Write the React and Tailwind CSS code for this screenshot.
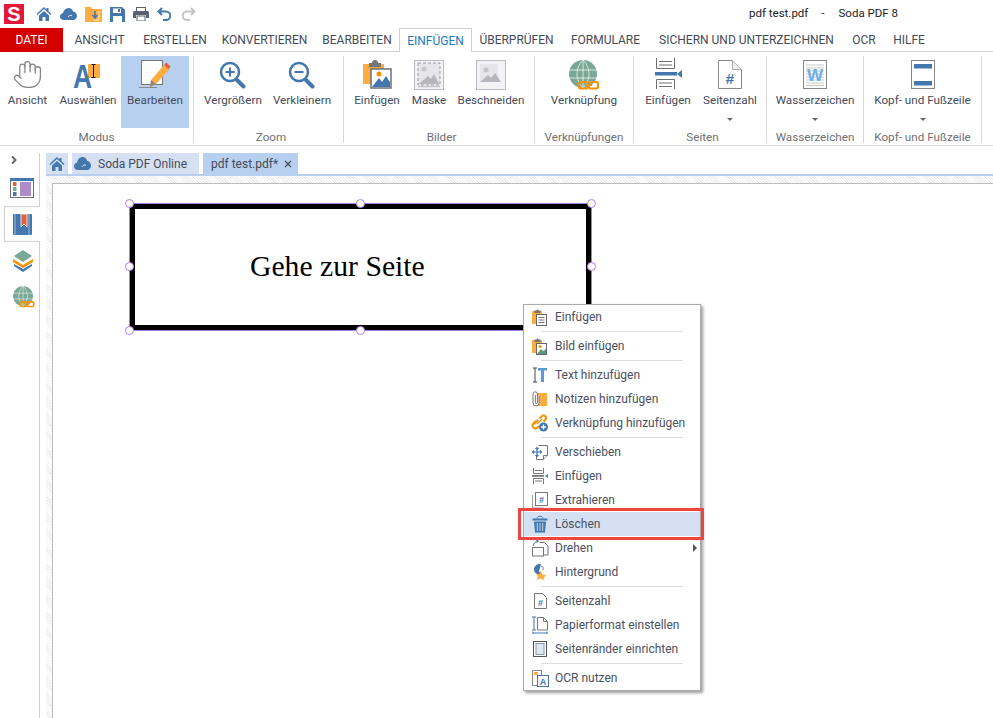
import React from "react";
import { Hand } from "lucide-react";

const BLUE = "#4377ad";
const ORANGE = "#ffad42";
const GREEN = "#7aa897";

// toolbar icons
function HomeIcon({ size = 16 }) {
  return (
    <svg width={size} height={size} viewBox="0 0 16 16">
      <path d="M8 1 0.500 8l1 1L8 3l6.500 6 1-1-3-2.800V2h-2v1.400z" fill={BLUE} />
      <path d="M3 9.500 8 5l5 4.500V15H9.500v-4h-3v4H3z" fill={BLUE} />
    </svg>
  );
}

function CloudIcon({ w = 17, h = 12 }) {
  return (
    <svg width={w} height={h} viewBox="0 0 17 12" preserveAspectRatio="none">
      <path d="M4 12C1.500 12 0 10.500 0 8.500 0 6.500 1.500 5.300 3 5.200 3.600 2.200 5.800 0 8.500 0c2.400 0 4 1.500 4.600 3.500C15.300 3.800 17 5.800 17 8c0 2.300-1.800 4-4 4z" fill={BLUE} />
      <path d="M8 9c1-1.500 2.500-2 4-1.500" stroke="#fff" strokeWidth="0.800" fill="none" />
    </svg>
  );
}

function QuickBar() {
  return (
    <div className="flex items-center h-7 relative">
      <div className="ml-1 w-5 h-5 bg-[#e31837] text-white font-bold text-[20px] leading-5 text-center font-['Liberation_Sans',sans-serif]">S</div>
      <div className="ml-3 w-4 h-4 -mt-[1px]"><HomeIcon /></div>
      <div className="ml-2"><CloudIcon /></div>
      <svg className="ml-2" width="17" height="16" viewBox="0 0 17 16">
        <path d="M0 1h6l1 2h10v13H0z" fill={ORANGE} />
        <path d="M10 5v6m-2.500-2 2.500 3 2.500-3" stroke={BLUE} strokeWidth="1.500" fill="none" />
        <path d="M8 14h6V5" stroke="#fff" strokeWidth="0.800" fill="none" />
      </svg>
      <svg className="ml-2" width="15" height="15" viewBox="0 0 15 15">
        <path d="M0 0h12l3 3v12H0z" fill={BLUE} />
        <rect x="3" y="1.500" width="8" height="4.500" fill="#fff" />
        <rect x="8" y="2" width="2" height="3" fill={BLUE} />
        <rect x="3" y="9" width="9" height="6" fill="#fff" />
      </svg>
      <svg className="ml-2" width="16" height="14" viewBox="0 0 16 14">
        <rect x="3.500" y="0.500" width="9" height="4" fill="#fff" stroke="#5a6270" />
        <path d="M1.500 4h13A1.500 1.500 0 0 1 16 5.500V11h-3V8H3v3H0V5.500A1.500 1.500 0 0 1 1.500 4z" fill="#5a6270" />
        <rect x="4" y="9" width="8" height="5" fill="#fff" stroke="#5a6270" />
      </svg>
      <svg className="ml-2" width="14" height="14" viewBox="0 0 14 14">
        <path d="M5 1 1.500 4.500 5 8M2 4.500h7a3.800 3.800 0 0 1 0 8.500H6" fill="none" stroke={BLUE} strokeWidth="2" />
      </svg>
      <svg className="ml-[11px]" width="14" height="14" viewBox="0 0 14 14">
        <path d="M9 1l3.500 3.500L9 8M12 4.500H5a3.800 3.800 0 0 0 0 8.500h3" fill="none" stroke="#c3c4c7" strokeWidth="2" />
      </svg>
      <div className="absolute left-[749px] top-[5px] text-[11.5px] text-[#222] flex">
        <span>pdf test.pdf</span>
        <span className="ml-[13px]">-</span>
        <span className="ml-[14px]">Soda PDF 8</span>
      </div>
    </div>
  );
}

const tabs = [
  { label: "ANSICHT", cls: "w-[73px]" },
  { label: "ERSTELLEN", cls: "w-[78px]" },
  { label: "KONVERTIEREN", cls: "w-[101px]" },
  { label: "BEARBEITEN", cls: "w-[84px]" },
  { label: "EINFÜGEN", cls: "w-[73px] h-[24px] bg-white border border-b-0 border-[#d0d0d0] !text-[#1d79c4]" },
  { label: "ÜBERPRÜFEN", cls: "w-[89px]" },
  { label: "FORMULARE", cls: "w-[89px]" },
  { label: "SICHERN UND UNTERZEICHNEN", cls: "w-[193px]" },
  { label: "OCR", cls: "w-[42px]" },
  { label: "HILFE", cls: "w-[48px]" },
];

function TabBar() {
  return (
    <div className="flex h-[24px] border-b border-[#d4d4d4] text-[12px] text-[#444b58]">
      <div className="w-[63px] h-[24px] bg-[#d40000] text-white flex items-center justify-center">DATEI</div>
      {tabs.map((t) => (
        <div key={t.label} className={"flex items-center justify-center whitespace-nowrap " + t.cls}>{t.label}</div>
      ))}
    </div>
  );
}

// ribbon icons
function SelectIcon() {
  return (
    <svg width="30" height="32" viewBox="0 0 30 32" overflow="visible">
      <rect x="15" y="5" width="12" height="14" fill={ORANGE} />
      <text transform="translate(0 29) scale(0.8 1)" fontFamily="Liberation Sans" fontWeight="bold" fontSize="33" fill={BLUE}>A</text>
      <path d="M18.500 5.500h4m-2 0v13m-2 0h4" stroke="#111" strokeWidth="1" fill="none" />
    </svg>
  );
}

function EditIcon() {
  return (
    <svg width="34" height="32" viewBox="0 0 34 32">
      <rect x="3.500" y="1.500" width="21" height="24" fill="#fff" stroke="#777" />
      <path d="M1 28.500h18" stroke="#888" />
      <path d="M13 21 26 6l5 4.500L18 25l-6 3z" fill={ORANGE} />
      <path d="M26 6l2.500-2.500 4 4-2 3z" fill="#e2603f" />
      <path d="M13 21l5 4-6 3z" fill="#888" />
    </svg>
  );
}

function ZoomIcon({ plus }) {
  return (
    <svg width="28" height="30" viewBox="0 0 28 30">
      <circle cx="11" cy="13" r="9" fill="#fff" stroke={BLUE} strokeWidth="2.500" />
      <path d="M6.500 13h9" stroke={BLUE} strokeWidth="2" />
      {plus && <path d="M11 8.500v9" stroke={BLUE} strokeWidth="2" />}
      <path d="M18 21l6.500 6.500" stroke={BLUE} strokeWidth="4" strokeLinecap="round" />
    </svg>
  );
}

function PasteImgIcon() {
  return (
    <svg width="30" height="30" viewBox="0 0 30 30">
      <path d="M1 5h21v20H1z" fill={ORANGE} />
      <path d="M7 4h3a3 3 0 0 1 6 0h3v4H7z" fill="#74767c" />
      <rect x="9" y="10" width="20" height="19" fill="#fff" stroke="#6a6f78" strokeWidth="1.500" />
      <path d="M10 28l7-9 3 4 4-6 4 6v5z" fill={BLUE} />
      <circle cx="17" cy="15" r="2.500" fill="#f59300" />
    </svg>
  );
}

function ImgGrayIcon({ dashed }) {
  return (
    <svg className="mt-[1px]" width="30" height="30" viewBox="0 0 30 30">
      <rect x="0.500" y="0.500" width="29" height="29" fill="#f3f3f5" stroke="#bcbcc4" />
      {dashed ? (
        <>
          <rect x="4" y="3" width="22" height="22" fill="#e6e6ea" stroke="#9a9aa2" strokeDasharray="3 2" />
          <circle cx="10" cy="9" r="2.500" fill="#c4c4cc" />
          <path d="M5 24l9-8 3 3 3-5 5 10z" fill="#b5b5bd" />
          <path d="M4 26.500h22" stroke="#c4c4cc" strokeWidth="1.500" />
        </>
      ) : (
        <>
          <rect x="4" y="4" width="18" height="18" fill="#e6e6ea" />
          <circle cx="10" cy="10" r="2.500" fill="#c4c4cc" />
          <path d="M4 22l8-7 3 3 4-5 6 9z" fill="#b5b5bd" />
        </>
      )}
    </svg>
  );
}

function GlobeLinkIcon({ scale = 1, cls = "" }) {
  return (
    <svg className={cls} width={31 * scale} height={30 * scale} viewBox="0 0 31 30">
      <circle cx="14" cy="14" r="14" fill={GREEN} />
      <path d="M0 10h28M0 18h28M14 0v28M14 0c-8 8-8 20 0 28M14 0c8 8 8 20 0 28" fill="none" stroke="#fff" strokeWidth="0.700" />
      <rect x="10" y="22" width="9" height="6.500" rx="2" fill="none" stroke="#f59300" strokeWidth="2.200" />
      <rect x="20" y="22" width="9" height="6.500" rx="2" fill="none" stroke="#f59300" strokeWidth="2.200" />
      <path d="M16 25.200h7" stroke="#f59300" strokeWidth="1.500" />
    </svg>
  );
}

function PageInsertIcon() {
  return (
    <svg className="-mt-[1px]" width="27" height="32" viewBox="0 0 27 32">
      <path d="M1.500 0v10.500h18V0M4 3.500h13M4 7h13" fill="none" stroke="#6f7075" />
      <rect x="0" y="14" width="22" height="3.500" fill={BLUE} />
      <path d="M27 12v8l-5-4z" fill={BLUE} />
      <path d="M1.500 31V21.500h18V31M4 25h13M4 28.500h13" fill="none" stroke="#6f7075" />
    </svg>
  );
}

function PageNumIcon() {
  return (
    <svg className="mt-[1px]" width="24" height="30" viewBox="0 0 24 30">
      <path d="M0.500 0.500h14l9 9v19H0.500z" fill="#fff" stroke="#888" />
      <path d="M14.500 0.500v9h9" fill="#eee" stroke="#aaa" />
      <text x="12" y="24" textAnchor="middle" fontFamily="Liberation Sans" fontWeight="bold" fontSize="15" fill={BLUE}>#</text>
    </svg>
  );
}

function WatermarkIcon() {
  return (
    <svg className="mt-[1px]" width="24" height="30" viewBox="0 0 24 30">
      <rect x="0.500" y="0.500" width="23" height="28" fill="#fff" stroke="#888" />
      <path d="M3 5h18M3 8h18M3 11h18M3 14h18M3 17h18M3 20h18M3 23h18M3 25.500h18" stroke="#c9c9c9" />
      <text x="12" y="21" textAnchor="middle" fontFamily="Liberation Sans" fontWeight="bold" fontSize="17" fill="#6db0e6">W</text>
    </svg>
  );
}

function HeaderFooterIcon() {
  return (
    <svg className="mt-[1px]" width="24" height="30" viewBox="0 0 24 30">
      <rect x="0.500" y="0.500" width="23" height="28" fill="#fff" stroke="#888" />
      <rect x="3" y="4" width="18" height="4.500" fill={BLUE} />
      <rect x="3" y="21" width="18" height="4.500" fill={BLUE} />
    </svg>
  );
}

function RibbonItem({ label, icon, cls, active, caret }) {
  return (
    <div className={"relative flex flex-col items-center h-[72px] whitespace-nowrap " + cls + (active ? " bg-[#b8d0ef]" : "")}>
      <div className="h-[36px] pt-[3px] flex items-start justify-center">{icon}</div>
      <div className="text-[11.7px] leading-[16px] text-[#444b58]">{label}</div>
      {caret && <div className="mt-[10px] w-0 h-0 border-x-[3px] border-x-transparent border-t-[3px] border-t-[#666]" />}
    </div>
  );
}

function RibbonGroup({ title, cls, children }) {
  return (
    <div className={"flex flex-col h-[87px] mt-[4px] border-r border-[#d9d9d9] " + cls}>
      <div className="flex h-[72px]">{children}</div>
      <div className="flex-1 pt-[1px] flex items-center justify-center text-[11.7px] text-[#6f7075] whitespace-nowrap">{title}</div>
    </div>
  );
}

function Ribbon() {
  return (
    <div className="flex h-[94px] border-b border-[#d4d4d4]">
      <RibbonGroup title="Modus" cls="w-[194px]">
        <RibbonItem label="Ansicht" cls="w-[55px]" icon={<Hand size={31} strokeWidth={1} color="#888" />} />
        <RibbonItem label="Auswählen" cls="w-[66px]" icon={<SelectIcon />} />
        <RibbonItem label="Bearbeiten" cls="w-[68px]" active icon={<EditIcon />} />
      </RibbonGroup>
      <RibbonGroup title="Zoom" cls="w-[150px] pl-[5px]">
        <RibbonItem label="Vergrößern" cls="w-[68px]" icon={<ZoomIcon plus />} />
        <RibbonItem label="Verkleinern" cls="w-[70px]" icon={<ZoomIcon />} />
      </RibbonGroup>
      <RibbonGroup title="Bilder" cls="w-[191px] pl-[5px]">
        <RibbonItem label="Einfügen" cls="w-[56px]" icon={<PasteImgIcon />} />
        <RibbonItem label="Maske" cls="w-[48px]" icon={<ImgGrayIcon dashed />} />
        <RibbonItem label="Beschneiden" cls="w-[76px]" icon={<ImgGrayIcon />} />
      </RibbonGroup>
      <RibbonGroup title="Verknüpfungen" cls="w-[99px]">
        <RibbonItem label="Verknüpfung" cls="w-[98px]" icon={<GlobeLinkIcon cls="mt-[1px]" />} />
      </RibbonGroup>
      <RibbonGroup title="Seiten" cls="w-[133px] pl-[5px]">
        <RibbonItem label="Einfügen" cls="w-[58px]" icon={<PageInsertIcon />} />
        <RibbonItem label="Seitenzahl" cls="w-[66px]" caret icon={<PageNumIcon />} />
      </RibbonGroup>
      <RibbonGroup title="Wasserzeichen" cls="w-[97px]">
        <RibbonItem label="Wasserzeichen" cls="w-[96px]" caret icon={<WatermarkIcon />} />
      </RibbonGroup>
      <RibbonGroup title="Kopf- und Fußzeile" cls="w-[118px]">
        <RibbonItem label="Kopf- und Fußzeile" cls="w-[117px]" caret icon={<HeaderFooterIcon />} />
      </RibbonGroup>
    </div>
  );
}

function Sidebar() {
  return (
    <div className="w-[40px] shrink-0 flex flex-col pt-[7px]">
      <div className="h-[53px] border-r border-[#d0d0d0] flex flex-col items-center pr-[12px]">
        <svg className="mt-[3px]" width="6" height="8" viewBox="0 0 6 8">
          <path d="M1 0.500 4.500 4 1 7.500" fill="none" stroke="#666" strokeWidth="2" />
        </svg>
        <svg className="mt-[14px] ml-[17px]" width="24" height="20" viewBox="0 0 24 20">
          <rect x="0.500" y="0.500" width="23" height="19" fill="#fff" stroke="#6f7075" />
          <rect x="0" y="0" width="24" height="3" fill={BLUE} />
          <rect x="3" y="4" width="3.500" height="4" fill="#e2603f" />
          <rect x="3" y="9" width="3.500" height="4" fill={GREEN} />
          <rect x="3" y="14" width="3.500" height="4" fill={BLUE} />
          <rect x="10" y="4" width="11" height="14" fill="#ad8cc9" />
        </svg>
      </div>
      <div className="h-[36px] ml-[4px] bg-white border border-r-0 border-[#d0d0d0] flex items-center justify-center">
        <svg width="19" height="21" viewBox="0 0 19 21">
          <path d="M1 0h17a1 1 0 0 1 1 1v19a1 1 0 0 1-1 1H1a1 1 0 0 1-1-1V1a1 1 0 0 1 1-1z" fill={BLUE} />
          <path d="M2 0v21M16 0v21" stroke="#fff" strokeWidth="0.500" />
          <path d="M8 0h6v13l-3-3-3 3z" fill="#e2603f" stroke="#fff" strokeWidth="0.800" />
        </svg>
      </div>
      <div className="flex-1 border-r border-[#d0d0d0] flex flex-col items-start pl-[12px] pt-[8px]">
        <svg width="22" height="22" viewBox="0 0 22 22">
          <path d="M11 0l9 6-9 6-9-6z" fill={GREEN} />
          <path d="M1 9l10 6 10-6v3l-10 6-10-6z" fill="#f59300" />
          <path d="M2 14l9 5 9-5v2l-9 6-9-6z" fill={BLUE} />
        </svg>
        <div className="mt-[14px] ml-[1px]"><GlobeLinkIcon scale={0.72} /></div>
      </div>
    </div>
  );
}

function DocTabs() {
  return (
    <div className="flex items-end h-[23px] text-[12px] text-[#444b58] border-b-[2px] border-[#b8d0ef] ml-[6px]">
      <div className="w-[22px] h-[21px] bg-[#d5e0f3] flex items-center justify-center"><HomeIcon size={16} /></div>
      <div className="ml-[4px] w-[127px] h-[21px] bg-[#d5e0f3] flex items-center pl-[2px]">
        <CloudIcon w={17} h={13} />
        <span className="ml-[7px]">Soda PDF Online</span>
      </div>
      <div className="ml-[4px] w-[95px] h-[21px] bg-[#b8d0ef] flex items-center pl-[8px]">
        <span>pdf test.pdf*</span>
        <svg className="ml-[6px]" width="8" height="8" viewBox="0 0 8 8">
          <path d="M1 1l6 6M7 1 1 7" stroke="#444b58" strokeWidth="1.200" />
        </svg>
      </div>
    </div>
  );
}

function Handle({ cls }) {
  return <div className={"absolute w-[9px] h-[9px] rounded-full bg-white border-[1.5px] border-[#b07fe6] " + cls} />;
}

function Page() {
  return (
    <div className="flex-1 ml-[6px] pt-[7px] pl-[6px] bg-[repeating-linear-gradient(45deg,#efefef_0,#efefef_1px,#ffffff_1px,#ffffff_2px)]">
      <div className="h-full bg-white border-t border-l border-[#bdbdbd] pt-[19px] pl-[76px]">
        <div className="relative w-[463px] h-[128px] border border-[#a97bdc]">
          <div className="h-full border-[5px] border-black flex items-center pl-[115px] pb-[1px] font-['Liberation_Serif',serif] text-[29.7px] text-black whitespace-nowrap">
            Gehe zur Seite
          </div>
          <Handle cls="-left-[5px] -top-[5px]" />
          <Handle cls="left-[226px] -top-[5px]" />
          <Handle cls="-right-[5px] -top-[5px]" />
          <Handle cls="-left-[5px] top-[58px]" />
          <Handle cls="-right-[5px] top-[58px]" />
          <Handle cls="-left-[5px] -bottom-[5px]" />
          <Handle cls="left-[226px] -bottom-[5px]" />
          <Handle cls="-right-[5px] -bottom-[5px]" />
        </div>
      </div>
    </div>
  );
}

// context menu icons, all 18x18
const Ic = ({ children }) => (
  <svg width="18" height="18" viewBox="0 0 18 18">{children}</svg>
);

const menuIcons = {
  paste: (
    <Ic>
      <path d="M1 3h10v13H1z" fill={ORANGE} />
      <path d="M3.500 2.500h2a1 1 0 0 1 2 0h2V5h-6z" fill="#74767c" />
      <rect x="5.500" y="6.500" width="10" height="11" fill="#fff" stroke="#666" />
      <path d="M7.500 9.500h6M7.500 12h6M7.500 14.500h6" stroke="#777" />
    </Ic>
  ),
  pasteImg: (
    <Ic>
      <path d="M1 3h10v13H1z" fill={ORANGE} />
      <path d="M3.500 2.500h2a1 1 0 0 1 2 0h2V5h-6z" fill="#74767c" />
      <rect x="5.500" y="6.500" width="10" height="11" fill="#fff" stroke="#666" />
      <path d="M6 17l4-5 2 2 3-2v5z" fill="#5a9a7a" />
      <circle cx="9" cy="9.500" r="1.500" fill="#f59300" />
    </Ic>
  ),
  text: (
    <Ic>
      <path d="M2 2h4M4 2v14M2 16h4" stroke="#444" fill="none" />
      <path d="M7 2h9v2.500h-3V16h-3V4.500H7z" fill="#5a9ad8" />
    </Ic>
  ),
  note: (
    <Ic>
      <path d="M6 3h10v13H6z" fill={ORANGE} />
      <path d="M8 6v7a3 3 0 0 1-6 0V4a2.200 2.200 0 0 1 4.400 0v8.500a1 1 0 0 1-2 0V5" fill="#fff" stroke="#777" />
    </Ic>
  ),
  link: (
    <Ic>
      <path d="M3 10l4-4M8.500 4.500l2-2a2.500 2.500 0 0 1 4 3l-2 2" fill="none" stroke="#f59300" strokeWidth="2" />
      <path d="M5 7l-2.500 2.500a2.800 2.800 0 0 0 4 4L8 12" fill="none" stroke="#f59300" strokeWidth="2" />
      <path d="M6 10l5-5" stroke="#f59300" strokeWidth="1.500" />
      <circle cx="12.500" cy="13" r="4.500" fill={BLUE} />
      <path d="M10 13h5M12.500 10.500v5" stroke="#fff" strokeWidth="1.300" />
    </Ic>
  ),
  move: (
    <Ic>
      <path d="M7.500 2.500h9v10l-4 4h-7V12" fill="#fff" stroke="#777" />
      <path d="M12.500 16.500v-4h4" fill="#eee" stroke="#777" />
      <path d="M6 4.500v9M1.500 9h9M4.500 6 6 4.500 7.500 6M4.500 12 6 13.500 7.500 12M3 7.500 1.500 9 3 10.500M9 7.500 10.500 9 9 10.500" fill="none" stroke={BLUE} strokeWidth="1.200" />
    </Ic>
  ),
  insert: (
    <Ic>
      <path d="M2.500 1v5.500h10V1M4 3.500h7" fill="none" stroke="#777" />
      <rect x="1" y="8" width="12" height="1.800" fill="#777" />
      <path d="M17 7v4l-3-2z" fill={BLUE} />
      <path d="M2.500 17v-5.500h10V17M4 14h7" fill="none" stroke="#777" />
    </Ic>
  ),
  extract: (
    <Ic>
      <path d="M1.500 4v13h11" fill="none" stroke="#999" />
      <rect x="4.500" y="1.500" width="12" height="13" fill="#fff" stroke="#777" />
      <text x="10.500" y="12" textAnchor="middle" fontFamily="Liberation Sans" fontWeight="bold" fontSize="9" fill={BLUE}>#</text>
    </Ic>
  ),
  trash: (
    <Ic>
      <path d="M1.500 3.500h15v2h-15z" fill={BLUE} />
      <path d="M6 3.500c0-3 6-3 6 0" fill="none" stroke={BLUE} />
      <path d="M3 6.500h12l-1 11H4z" fill={BLUE} />
      <path d="M6.300 8v8M9 8v8M11.700 8v8" stroke="#d5e0f3" strokeWidth="0.900" />
    </Ic>
  ),
  rotate: (
    <Ic>
      <path d="M8.500 3.500h5l3.500 3.500v9H8.500" fill="#fff" stroke="#777" />
      <rect x="1.500" y="8.500" width="11" height="8.500" fill="#fff" stroke="#777" />
      <path d="M2 7c1-3 3-5 5-5M5 1l2.500 1L5.500 4" fill="none" stroke={BLUE} />
    </Ic>
  ),
  background: (
    <Ic>
      <path d="M3 6a5 5 0 0 1 7-4.500L8 8l2 3a5 5 0 0 1-7-5z" fill={BLUE} />
      <path d="M10 3c2 0 2.500 2 2 4" stroke={BLUE} fill="none" />
      <path d="M9.500 7.500l2 4 4 1-3 2 1 3-4-2-4 1.500 1.500-4-2.500-1.500 4-.5z" fill={ORANGE} />
    </Ic>
  ),
  pageNum: (
    <Ic>
      <path d="M3.500 1.500h8l4 4v11h-12z" fill="#fff" stroke="#777" />
      <text x="9.500" y="13.500" textAnchor="middle" fontFamily="Liberation Sans" fontWeight="bold" fontSize="9" fill={BLUE}>#</text>
    </Ic>
  ),
  paper: (
    <Ic>
      <path d="M1 1h4M3 1v13M1 14h4" stroke={BLUE} fill="none" />
      <path d="M6.500 1.500h6l4 4v8.500h-10z" fill="#fff" stroke="#777" />
      <path d="M12.500 1.500v4h4" fill="none" stroke="#777" />
      <path d="M2 17h14M2 15.500v3M16 15.500v3" stroke={BLUE} fill="none" />
    </Ic>
  ),
  margin: (
    <Ic>
      <rect x="2.500" y="1.500" width="13" height="15" fill="#fff" stroke="#555" />
      <rect x="5" y="3.500" width="8" height="11" fill="#dce9f5" stroke="#8a9bb0" />
    </Ic>
  ),
  ocr: (
    <Ic>
      <path d="M1.500 1.500h9v15h-9z" fill="#fff" stroke="#888" />
      <rect x="3" y="3" width="4" height="3" fill={ORANGE} />
      <rect x="6.500" y="6.500" width="11" height="11" fill="#fff" stroke={BLUE} />
      <text x="12" y="15.500" textAnchor="middle" fontFamily="Liberation Sans" fontWeight="bold" fontSize="9" fill={BLUE}>A</text>
    </Ic>
  ),
};

const menu = [
  { label: "Einfügen", icon: "paste" },
  { sep: true },
  { label: "Bild einfügen", icon: "pasteImg" },
  { sep: true },
  { label: "Text hinzufügen", icon: "text" },
  { label: "Notizen hinzufügen", icon: "note" },
  { label: "Verknüpfung hinzufügen", icon: "link" },
  { sep: true },
  { label: "Verschieben", icon: "move" },
  { label: "Einfügen", icon: "insert" },
  { label: "Extrahieren", icon: "extract" },
  { label: "Löschen", icon: "trash", active: true },
  { label: "Drehen", icon: "rotate", sub: true },
  { label: "Hintergrund", icon: "background" },
  { sep: true },
  { label: "Seitenzahl", icon: "pageNum" },
  { label: "Papierformat einstellen", icon: "paper" },
  { label: "Seitenränder einrichten", icon: "margin" },
  { sep: true },
  { label: "OCR nutzen", icon: "ocr" },
];

function ContextMenu() {
  return (
    <div className="absolute left-[523px] top-[304px] w-[178px] bg-white border border-[#aaaaaa] shadow-[2px_2px_3px_rgba(0,0,0,0.4)] text-[12px] text-[#4a5060]">
      {menu.map((m, i) =>
        m.sep ? (
          <div key={i} className="h-[5px] pl-[17px] pr-[17px] flex items-center">
            <div className="w-full h-[1px] bg-[#dddddd]" />
          </div>
        ) : (
          <div key={i} className={"relative h-[24px] flex items-center pl-[7px] whitespace-nowrap" + (m.active ? " bg-[#d5e0f3]" : "")}>
            <div className="w-[18px] h-[18px]">{menuIcons[m.icon]}</div>
            <span className="ml-[6px]">{m.label}</span>
            {m.sub && <div className="absolute right-[3px] top-[8px] w-0 h-0 border-y-[4px] border-y-transparent border-l-[4px] border-l-[#555]" />}
          </div>
        )
      )}
    </div>
  );
}

export default function App() {
  return (
    <div className="relative w-[993px] h-[718px] overflow-hidden bg-white flex flex-col font-['Roboto',sans-serif]">
      <QuickBar />
      <TabBar />
      <Ribbon />
      <div className="flex-1 flex min-h-0">
        <Sidebar />
        <div className="flex-1 flex flex-col pt-[7px]">
          <DocTabs />
          <Page />
        </div>
      </div>
      <ContextMenu />
      {/* red annotation round the Löschen row */}
      <div className="absolute left-[518px] top-[508px] w-[186px] h-[32px] border-[3px] border-[#ef4444]" />
    </div>
  );
}
